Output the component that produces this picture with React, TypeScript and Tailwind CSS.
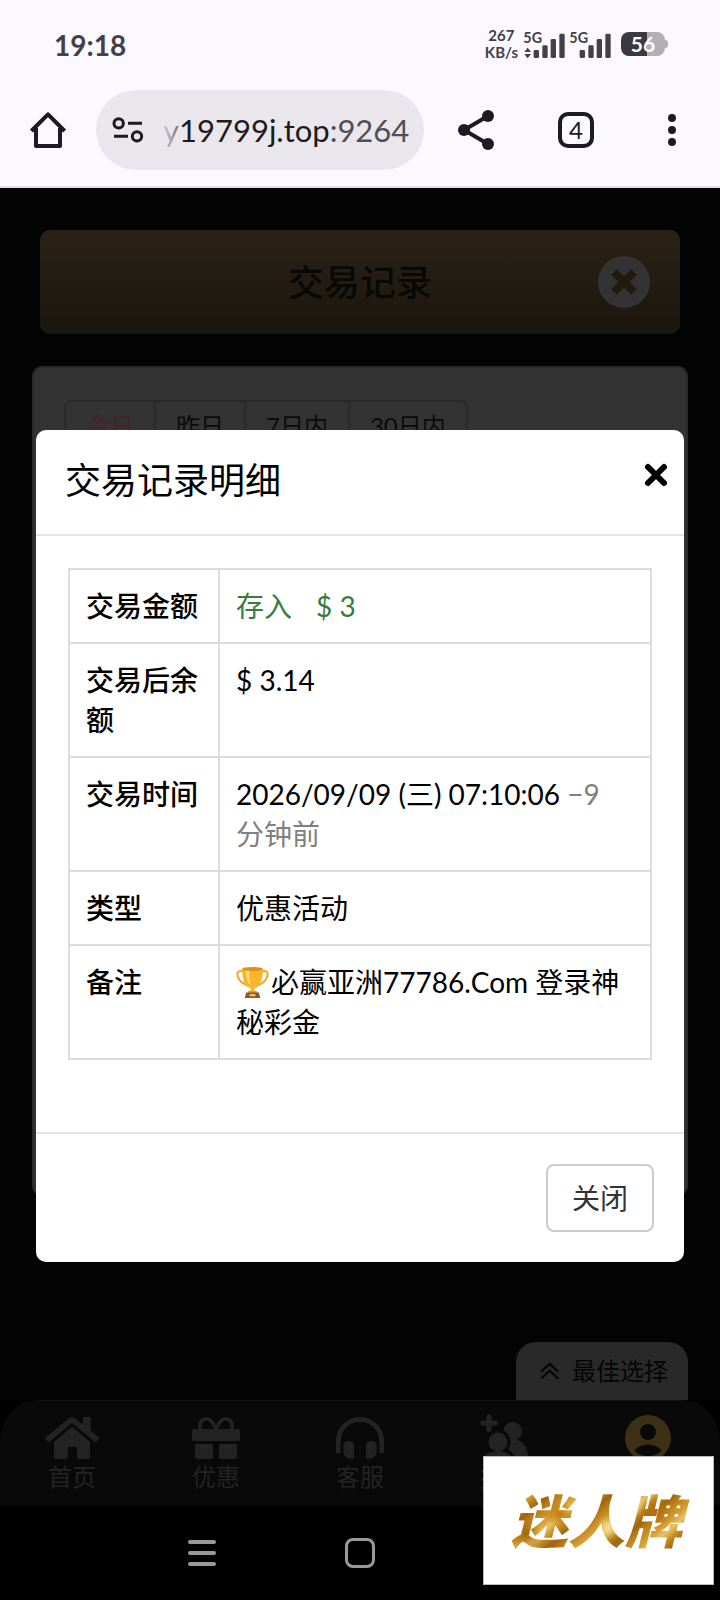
import type { ReactNode } from "react";

const periods = ["今日", "昨日", "7日内", "30日内"];

function Signal({ traffic = false }: { traffic?: boolean }) {
  return (
    <svg viewBox="490 84 126 90" className="h-[30px] w-[42px] overflow-visible" aria-hidden="true">
      <text x="491" y="125" fontSize="43" fontWeight="700" fill="#434046" fontFamily="Lato, sans-serif">5G</text>
      {traffic && <path d="M504 140l10 13h-20zM504 172l10-13h-20z" fill="#434046" />}
      <g fill="#434046">
        <rect x="522" y="147" width="16" height="24" rx="4" />
        <rect x="548" y="133" width="16" height="38" rx="4" />
        <rect x="573" y="114" width="16" height="57" rx="4" />
        <rect x="599" y="98" width="16" height="73" rx="4" />
      </g>
    </svg>
  );
}

function StatusBar() {
  return (
    <div className="flex h-[88px] items-center justify-between pl-[54px] pr-[52px] text-[#434046]">
      <span className="pt-0.5 text-[28px] font-bold leading-8">19:18</span>
      <div className="flex items-center gap-1">
        <div className="pr-px text-center text-[15px] font-bold leading-[17px]">
          <div>267</div>
          <div>KB/s</div>
        </div>
        <Signal traffic />
        <Signal />
        <div className="ml-1.5 flex items-center">
          <div className="flex h-6 w-11 items-center justify-center rounded-lg bg-[linear-gradient(90deg,#3b383e_58%,#b3afb5_58%)] text-[21px] font-bold leading-6 text-white">
            56
          </div>
          <div className="h-2 w-[3px] rounded-r bg-[#b3afb5]" />
        </div>
      </div>
    </div>
  );
}

function BrowserBar() {
  return (
    <div className="flex h-[98px] items-start pl-7 pr-9 text-[#1c1b20]">
      <button aria-label="主页" className="mt-[22px] flex h-10 w-10 items-center justify-center">
        <svg viewBox="87 333 114 114" className="h-[38px] w-[38px]" fill="none" stroke="currentColor" strokeWidth="12" strokeLinejoin="round">
          <path d="M94 393L144 343L194 393" />
          <path d="M108 384V438H180V384" />
        </svg>
      </button>
      <div className="ml-7 mt-0.5 flex h-20 min-w-0 flex-1 items-center rounded-full bg-[#e9e6ec] pl-4 pr-3">
        <svg viewBox="336 348 96 84" className="h-7 w-8 shrink-0" fill="none" stroke="currentColor" strokeWidth="9" aria-hidden="true">
          <circle cx="356" cy="370" r="14" />
          <path d="M384 370H426M342 409H384" />
          <circle cx="411" cy="409" r="14" />
        </svg>
        <div className="ml-[19px] flex-1 whitespace-nowrap text-[31px] leading-10">
          <span className="bg-linear-to-r from-[#d5d2d8] to-[#77747b] bg-clip-text text-transparent">y</span>
          <span>19799j.top</span>
          <span className="text-[#514f56]">:9264</span>
        </div>
      </div>
      <button aria-label="分享" className="ml-8 mt-5">
        <svg viewBox="288 324 120 132" className="h-11 w-10" fill="currentColor" stroke="currentColor">
          <path d="M384 348L312 390L384 432" fill="none" strokeWidth="12" />
          <circle cx="312" cy="390" r="18" stroke="none" />
          <circle cx="384" cy="348" r="18" stroke="none" />
          <circle cx="384" cy="432" r="18" stroke="none" />
        </svg>
      </button>
      <button aria-label="标签页" className="ml-[62px] mt-6 flex h-9 w-9 items-center justify-center rounded-[10px] border-4 border-current text-[24px] leading-6">
        4
      </button>
      <button aria-label="更多" className="ml-[66px] mt-6 flex h-9 w-6 flex-col items-center justify-center gap-1">
        <span className="h-2 w-2 rounded-full bg-current" />
        <span className="h-2 w-2 rounded-full bg-current" />
        <span className="h-2 w-2 rounded-full bg-current" />
      </button>
    </div>
  );
}

function Row({ label, children }: { label: string; children: ReactNode }) {
  return (
    <tr>
      <th scope="row" className="border-2 border-[#dcdcdc] p-4 text-left align-top font-medium">{label}</th>
      <td className="border-2 border-[#dcdcdc] p-4 align-top">{children}</td>
    </tr>
  );
}

function Trophy() {
  return (
    <svg viewBox="708 318 98 98" role="img" aria-label="奖杯" className="-mt-1.5 mr-0.5 inline-block h-[33px] w-[33px] align-middle">
      <path d="M730 335C702 324 706 366 748 378M784 335C812 324 808 366 766 378" fill="none" stroke="#f2a52b" strokeWidth="6" />
      <path d="M726 326C726 360 736 382 751 383V395H763V383C778 382 788 360 788 326Z" fill="#fbb52b" />
      <path d="M738 330C738 352 744 370 752 376C748 362 746 348 747 330Z" fill="#ffe08a" />
      <ellipse cx="757" cy="327" rx="31" ry="6" fill="#e08f1f" />
      <path d="M744 392h26v6h-26z" fill="#e89a24" />
      <path d="M738 397h38l4 16h-46z" fill="#84583f" />
      <path d="M748 401h18v7h-18z" fill="#f5c04a" />
    </svg>
  );
}

function DetailDialog() {
  return (
    <div role="dialog" aria-labelledby="detail-title" className="rounded-[10px] bg-white text-[28px] leading-10 text-black">
      <header className="flex items-start justify-between border-b-2 border-[#e5e5e5] pb-7 pl-[29px] pr-[15px] pt-6">
        <h2 id="detail-title" className="text-[36px] leading-[52px]">交易记录明细</h2>
        <button aria-label="关闭" className="mt-2">
          <svg viewBox="0 0 26 26" className="h-[26px] w-[26px]" stroke="currentColor" strokeWidth="6" strokeLinecap="round">
            <path d="M5 5L21 21M21 5L5 21" />
          </svg>
        </button>
      </header>
      <div className="px-8 pb-[72px] pt-8">
        <table className="w-full table-fixed border-collapse">
          <colgroup>
            <col className="w-[150px]" />
            <col />
          </colgroup>
          <tbody>
            <Row label="交易金额">
              <span className="text-[#3b7a3e]">存入<span className="ml-6">$ 3</span></span>
            </Row>
            <Row label="交易后余额">$ 3.14</Row>
            <Row label="交易时间">
              2026/09/09 (三) 07:10:06{" "}
              <span className="text-[#808080]">−9 <span className="whitespace-nowrap">分钟前</span></span>
            </Row>
            <Row label="类型">优惠活动</Row>
            <Row label="备注"><Trophy />必赢亚洲77786.Com 登录神秘彩金</Row>
          </tbody>
        </table>
      </div>
      <footer className="flex justify-end border-t-2 border-[#e5e5e5] px-[30px] py-[30px]">
        <button className="rounded-lg border-2 border-[#ccc] px-6 py-3 text-[#333]">关闭</button>
      </footer>
    </div>
  );
}

function NavItem({ label, active = false, children }: { label?: string; active?: boolean; children: ReactNode }) {
  return (
    <a href="#" className={active ? "flex flex-1 flex-col items-center text-[#3d3015]" : "flex flex-1 flex-col items-center text-[#232323]"}>
      {children}
      {label && <span className="text-[24px] leading-8">{label}</span>}
    </a>
  );
}

function BottomNav() {
  return (
    <nav className="flex h-[106px] rounded-t-[40px] border-t border-[#101010] bg-[#090909] pt-3.5">
      <NavItem label="首页">
        <svg viewBox="129 255 174 138" className="h-[46px] w-[58px]" fill="currentColor">
          <path d="M249 261h23v60l-23-20z" />
          <path d="M135 324L205 266Q216 257 227 266L299 324L288 338L216 279L145 338Z" />
          <path d="M162 335L216 291L270 335V381Q270 387 264 387H237Q231 387 231 381V356Q231 350 225 350H209Q203 350 203 356V381Q203 387 197 387H168Q162 387 162 381Z" />
        </svg>
      </NavItem>
      <NavItem label="优惠">
        <svg viewBox="570 255 156 138" className="h-[46px] w-[52px]" fill="currentColor">
          <path d="M601 297C595 275 608 265 623 267C638 269 641 286 648 296C655 286 658 269 673 267C688 265 701 275 695 297" fill="none" stroke="currentColor" strokeWidth="11" />
          <rect x="576" y="297" width="144" height="36" rx="6" />
          <path d="M585 342h54v45h-46q-8 0-8-8zM657 342h54v37q0 8-8 8h-46z" />
        </svg>
      </NavItem>
      <NavItem label="客服">
        <svg viewBox="1002 255 156 138" className="h-[46px] w-[52px]" fill="currentColor">
          <path d="M1015 369V333A65 65 0 0 1 1145 333V369" fill="none" stroke="currentColor" strokeWidth="14" />
          <path d="M1030 346Q1030 333 1046 333Q1062 333 1062 346V380Q1062 387 1056 387Q1030 385 1030 362ZM1130 346Q1130 333 1114 333Q1098 333 1098 346V380Q1098 387 1104 387Q1130 385 1130 362Z" />
        </svg>
      </NavItem>
      <NavItem label="推荐">
        <svg viewBox="354 255 156 138" className="h-[46px] w-[52px] overflow-visible" fill="currentColor">
          <path d="M387 260V299M368 279H406" stroke="currentColor" strokeWidth="15" strokeLinecap="round" />
          <circle cx="458" cy="304" r="28" />
          <path d="M440 335C480 318 505 342 505 390H455Z" />
          <g stroke="#090909" strokeWidth="9">
            <path d="M366 397C367 373 380 362 394 362A33 33 0 1 1 434 362C456 366 462 384 462 397Z" />
          </g>
        </svg>
      </NavItem>
      <NavItem active>
        <svg viewBox="786 255 156 138" className="h-[46px] w-[52px]" fill="currentColor" role="img" aria-label="我的">
          <circle cx="864" cy="324" r="69" />
          <circle cx="864" cy="306" r="24" fill="#090909" />
          <path d="M824 361C840 339 888 339 904 361C892 384 836 384 824 361Z" fill="#090909" />
        </svg>
      </NavItem>
    </nav>
  );
}

export default function App() {
  return (
    <div lang="zh-CN" className="relative flex min-h-screen flex-col bg-black font-[Lato,'Noto_Sans_CJK_SC',sans-serif]">
      <header className="border-b-2 border-[#e1e0e6] bg-[#fcf8ff]">
        <StatusBar />
        <BrowserBar />
      </header>

      <main className="relative flex flex-1 flex-col bg-[#040404]">
        <div className="mx-10 mt-[42px] grid h-[104px] grid-cols-[1fr_auto_1fr] items-center rounded-[10px] bg-linear-to-b from-[#2b2217] to-[#1b160e]">
          <h1 className="col-start-2 text-[36px] font-medium leading-[52px] text-[#090807]">交易记录</h1>
          <button aria-label="返回" className="mr-[30px] justify-self-end rounded-full bg-[#333] p-[13px] text-[#211a0f]">
            <svg viewBox="0 0 26 26" className="h-[26px] w-[26px]" stroke="currentColor" strokeWidth="8">
              <path d="M3 3L23 23M23 3L3 23" />
            </svg>
          </button>
        </div>

        <section className="mx-8 mt-8 min-h-[830px] rounded-[10px] border-2 border-[#292929] bg-[#333] p-[30px]">
          <div className="mt-0.5 inline-flex rounded-lg border-2 border-[#292929]">
            {periods.map((p, i) => (
              <button
                key={p}
                className={
                  i === 0
                    ? "px-5 py-2 text-[24px] leading-8 text-[#4b2023]"
                    : "border-l-2 border-[#292929] px-5 py-2 text-[24px] leading-8 text-[#0b0b0b]"
                }
              >
                {p}
              </button>
            ))}
          </div>
        </section>

        <button className="mr-8 mt-auto flex items-center gap-3 self-end rounded-t-[20px] bg-[#292929] pb-3 pl-6 pr-5 pt-3 text-[24px] leading-[34px] text-[#050505]">
          <svg viewBox="540 92 60 60" className="h-5 w-5" fill="none" stroke="currentColor" strokeWidth="6" aria-hidden="true">
            <path d="M543 124L569 100L595 124M543 145L569 121L595 145" />
          </svg>
          最佳选择
        </button>

        <div className="absolute inset-x-9 top-[242px]">
          <DetailDialog />
        </div>
      </main>

      <BottomNav />

      <div className="grid h-[94px] grid-cols-[1fr_auto_1fr] items-center bg-black">
        <button aria-label="最近任务" className="mr-[129px] flex w-7 flex-col gap-[7px] justify-self-end">
          <span className="h-1 rounded-full bg-[#999]" />
          <span className="h-1 rounded-full bg-[#999]" />
          <span className="h-1 rounded-full bg-[#999]" />
        </button>
        <button aria-label="主屏幕" className="h-[30px] w-[30px] rounded-lg border-[3px] border-[#999]" />
      </div>

      <a
        href="#"
        className="absolute bottom-[15px] right-1.5 flex h-[129px] w-[231px] items-center justify-center border border-[#bbb] bg-white"
      >
        <span className="bg-[radial-gradient(circle_at_30%_40%,#c07a10_0px,transparent_14px),radial-gradient(circle_at_55%_60%,#f6dd92_0px,transparent_12px),radial-gradient(circle_at_80%_35%,#b8700c_0px,transparent_16px),radial-gradient(circle_at_12%_70%,#a3660c_0px,transparent_15px),radial-gradient(circle_at_68%_25%,#f3d888_0px,transparent_12px),repeating-linear-gradient(140deg,#b97c18_0px,#d9a136_12px,#e8c468_18px,#c28a20_26px,#9c6410_34px,#b97c18_40px)] bg-clip-text pl-2 pr-3 text-[57px] font-black italic leading-[64px] text-transparent">
          迷人牌
        </span>
      </a>
    </div>
  );
}
